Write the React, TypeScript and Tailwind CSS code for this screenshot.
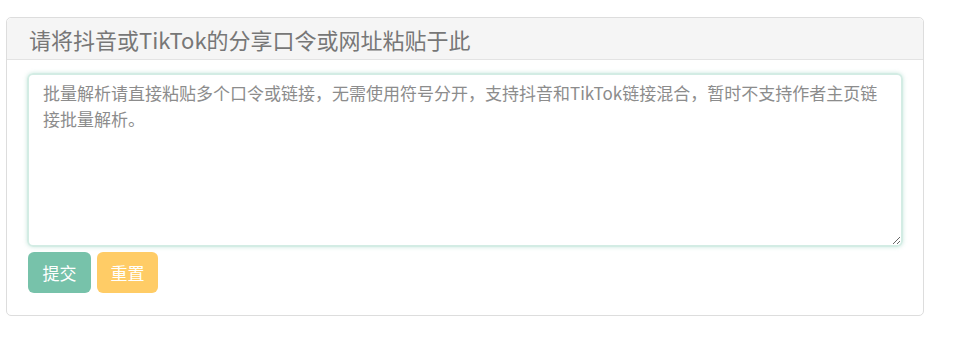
export default function App() {
  return (
    <div
      className="min-h-[341px] bg-white pt-[17px] pl-[6px]"
      style={{ fontFamily: '"Noto Sans CJK SC", "Noto Sans", sans-serif' }}
    >
      <div className="w-[918px] h-[299px] border border-[#dddddd] rounded-[5px] flex flex-col">
        <div className="h-[42px] bg-[#f5f5f5] border-b border-[#e3e3e3] rounded-t-[5px] px-[22px] flex items-center">
          <h3 className="text-[22px] leading-none text-[#777777]">请将抖音或TikTok的分享口令或网址粘贴于此</h3>
        </div>
        <div className="flex-1 px-[20px] pt-[13px]">
          <textarea
            className="block w-full h-[174px] border-2 border-[#d3ece4] rounded-[6px] shadow-[0_0_4px_rgba(120,195,170,0.4)] px-[14px] pt-[5px] text-[17px] leading-[26px] text-[#555] placeholder:text-[#8c8c8c] outline-none"
            placeholder="批量解析请直接粘贴多个口令或链接，无需使用符号分开，支持抖音和TikTok链接混合，暂时不支持作者主页链接批量解析。"
          />
          <div className="flex gap-[6px] mt-[5px] pl-[1px]">
            <button className="w-[63px] h-[41px] rounded-[6px] bg-[#77c2aa] text-white text-[17px]">提交</button>
            <button className="w-[61px] h-[41px] rounded-[6px] bg-[#ffcc66] text-white text-[17px]">重置</button>
          </div>
        </div>
      </div>
    </div>
  );
}
